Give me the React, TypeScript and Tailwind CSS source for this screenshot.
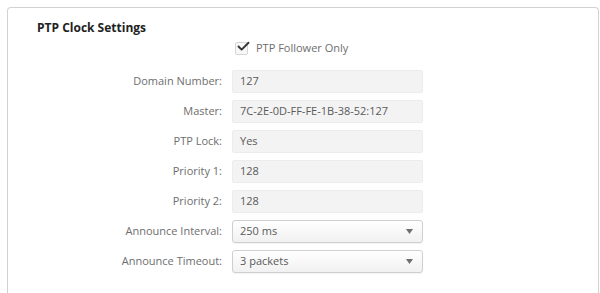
import { Check } from 'lucide-react';

const font = { fontFamily: '"Open Sans", "Noto Sans", sans-serif' };

function Label({ children }: { children: string }) {
  return (
    <div className="w-[224px] shrink-0 pr-[10px] text-right text-[11px] text-[#6e6e6e]">{children}</div>
  );
}

function Field({ label, value }: { label: string; value: string }) {
  return (
    <div className="flex items-center">
      <Label>{label}</Label>
      <div className="flex h-[23px] w-[191px] items-center rounded-[2px] border border-[#ececec] bg-[#f3f3f3] px-[7px] text-[11px] text-[#5a5a5a]">
        {value}
      </div>
    </div>
  );
}

function SelectField({ label, value }: { label: string; value: string }) {
  return (
    <div className="flex items-center">
      <Label>{label}</Label>
      <div className="flex h-[23px] w-[191px] items-center justify-between rounded-[3px] border border-[#cfcfcf] bg-gradient-to-b from-white to-[#f1f1f1] pl-[7px] pr-[9px] text-[11px] text-[#5a5a5a] shadow-[0_1px_1px_rgba(0,0,0,0.05)]">
        <span>{value}</span>
        <svg width="7" height="5" viewBox="0 0 7 5">
          <path d="M0 0h7L3.5 5z" fill="#6e6e6e" />
        </svg>
      </div>
    </div>
  );
}

export default function App() {
  return (
    <div className="h-[293px] w-[600px] overflow-hidden bg-white pl-[7px] pt-[7px]" style={font}>
      <div className="h-[286px] w-[592px] rounded-t-[4px] border border-b-0 border-[#d2d2d2]">
        <div className="pl-[29px] pt-[12px] text-[12px] font-bold leading-[16px] text-[#222]">PTP Clock Settings</div>

        <div className="mt-[4px] flex h-[16px] items-center pl-[227px]">
          <div className="flex h-[13px] w-[13px] items-center justify-center rounded-[2px] border border-[#d6d6d6] bg-[#f7f7f7]">
            <Check size={15} strokeWidth={3} color="#333" className="-mt-[3px] ml-[3px] shrink-0" />
          </div>
          <span className="ml-[8px] text-[11px] text-[#6e6e6e]">PTP Follower Only</span>
        </div>

        <div className="mt-[14px] flex flex-col gap-[7px]">
          <Field label="Domain Number:" value="127" />
          <Field label="Master:" value="7C-2E-0D-FF-FE-1B-38-52:127" />
          <Field label="PTP Lock:" value="Yes" />
          <Field label="Priority 1:" value="128" />
          <Field label="Priority 2:" value="128" />
          <SelectField label="Announce Interval:" value="250 ms" />
          <SelectField label="Announce Timeout:" value="3 packets" />
        </div>
      </div>
    </div>
  );
}
